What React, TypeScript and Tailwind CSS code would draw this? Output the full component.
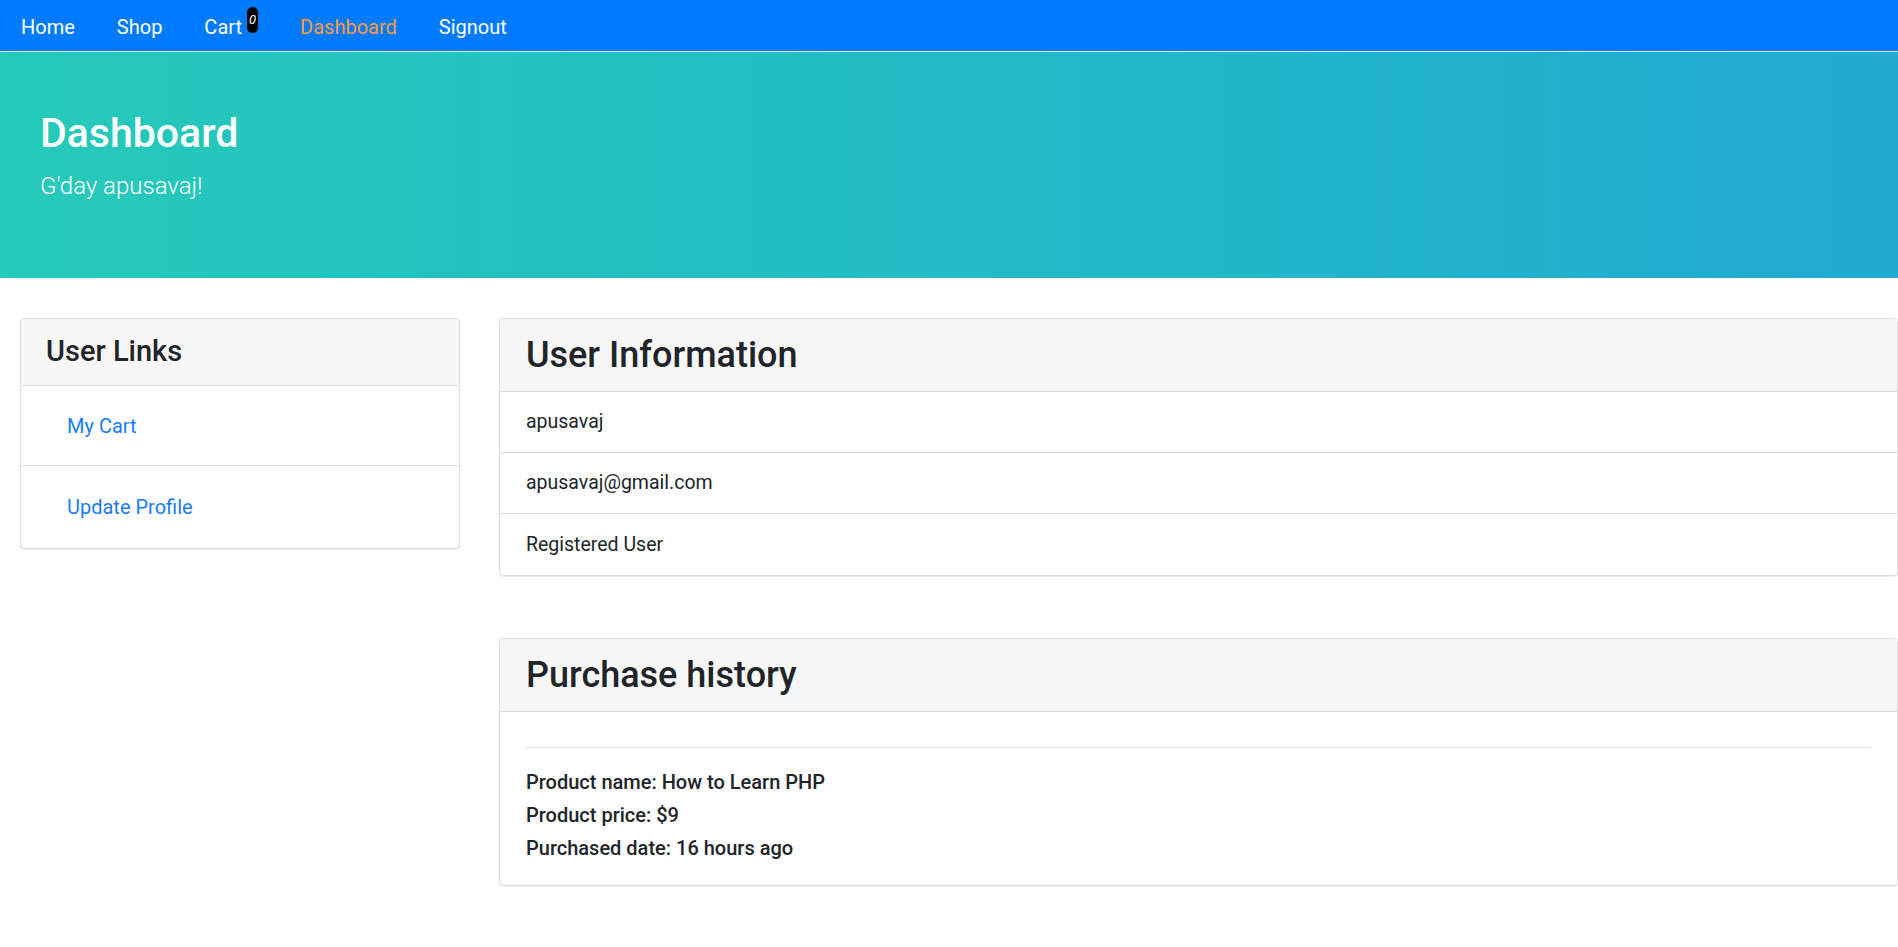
import { FC } from "react";

const font = { fontFamily: '"Segoe UI", Roboto, "Noto Sans", sans-serif' };

const NavBar: FC = () => {
    return (
        <nav className="h-[52px] bg-[#007bff] border-b border-[#dcdcdc] flex items-center pt-[2px]">
            <ul className="flex items-center text-[20px] text-white">
                <li className="px-[21px]">Home</li>
                <li className="px-[21px]">Shop</li>
                <li className="px-[21px] flex items-center">
                    <span>Cart</span>
                    <span className="relative -top-[7px] ml-[5px] w-[11px] h-[26px] rounded-full bg-black text-white text-[13px] italic flex items-center justify-center">0</span>
                </li>
                <li className="px-[21px] text-[#ff9a3c]">Dashboard</li>
                <li className="px-[21px]">Signout</li>
            </ul>
        </nav>
    );
};

const Card: FC<{ title: string; size: "sm" | "lg"; children: React.ReactNode }> = ({ title, size, children }) => {
    return (
        <div className="border border-[#dcdcdc] rounded-[4px] bg-white shadow-[0_1px_1px_rgba(0,0,0,0.08)] overflow-hidden">
            <div className={size === "sm"
                ? "h-[67px] bg-[#f7f7f7] border-b border-[#dcdcdc] px-[25px] flex items-center"
                : "h-[73px] bg-[#f7f7f7] border-b border-[#dcdcdc] px-[26px] flex items-center"}>
                <h3 className={size === "sm" ? "text-[29px] font-medium text-[#212529]" : "text-[36px] font-medium text-[#212529]"}>{title}</h3>
            </div>
            {children}
        </div>
    );
};

export default function App() {
    return (
        <div className="min-h-screen bg-white text-[#212529]" style={font}>
            <NavBar />

            {/* jumbotron */}
            <div className="h-[226px] bg-linear-to-r from-[#26cab9] to-[#22aad1] px-[40px] pt-[57px] text-white">
                <h2 className="text-[41px] font-medium leading-[1.2]">Dashboard</h2>
                <p className="text-[24px] font-light mt-[10px]">G'day apusavaj!</p>
            </div>

            <div className="flex items-start gap-[39px] pl-[20px] pt-[40px]">
                <div className="w-[440px] shrink-0">
                    <Card title="User Links" size="sm">
                        <ul className="text-[20px] text-[#1a7cf7]">
                            <li className="h-[80px] border-b border-[#dcdcdc] pl-[46px] flex items-center">My Cart</li>
                            <li className="h-[82px] pl-[46px] flex items-center">Update Profile</li>
                        </ul>
                    </Card>
                </div>

                <div className="w-[1399px] shrink-0 flex flex-col gap-[62px]">
                    <Card title="User Information" size="lg">
                        <ul className="text-[19.5px]">
                            <li className="h-[61px] border-b border-[#dcdcdc] px-[26px] flex items-center">apusavaj</li>
                            <li className="h-[61px] border-b border-[#dcdcdc] px-[26px] flex items-center">apusavaj@gmail.com</li>
                            <li className="h-[61px] px-[26px] flex items-center">Registered User</li>
                        </ul>
                    </Card>

                    <Card title="Purchase history" size="lg">
                        <div className="px-[26px] pt-[35px] pb-[20px]">
                            <hr className="border-t border-[#e3e3e3]" />
                            <div className="mt-[18px] text-[20px] font-medium leading-[33px]">
                                <p>Product name: How to Learn PHP</p>
                                <p>Product price: $9</p>
                                <p>Purchased date: 16 hours ago</p>
                            </div>
                        </div>
                    </Card>
                </div>
            </div>
        </div>
    );
}
